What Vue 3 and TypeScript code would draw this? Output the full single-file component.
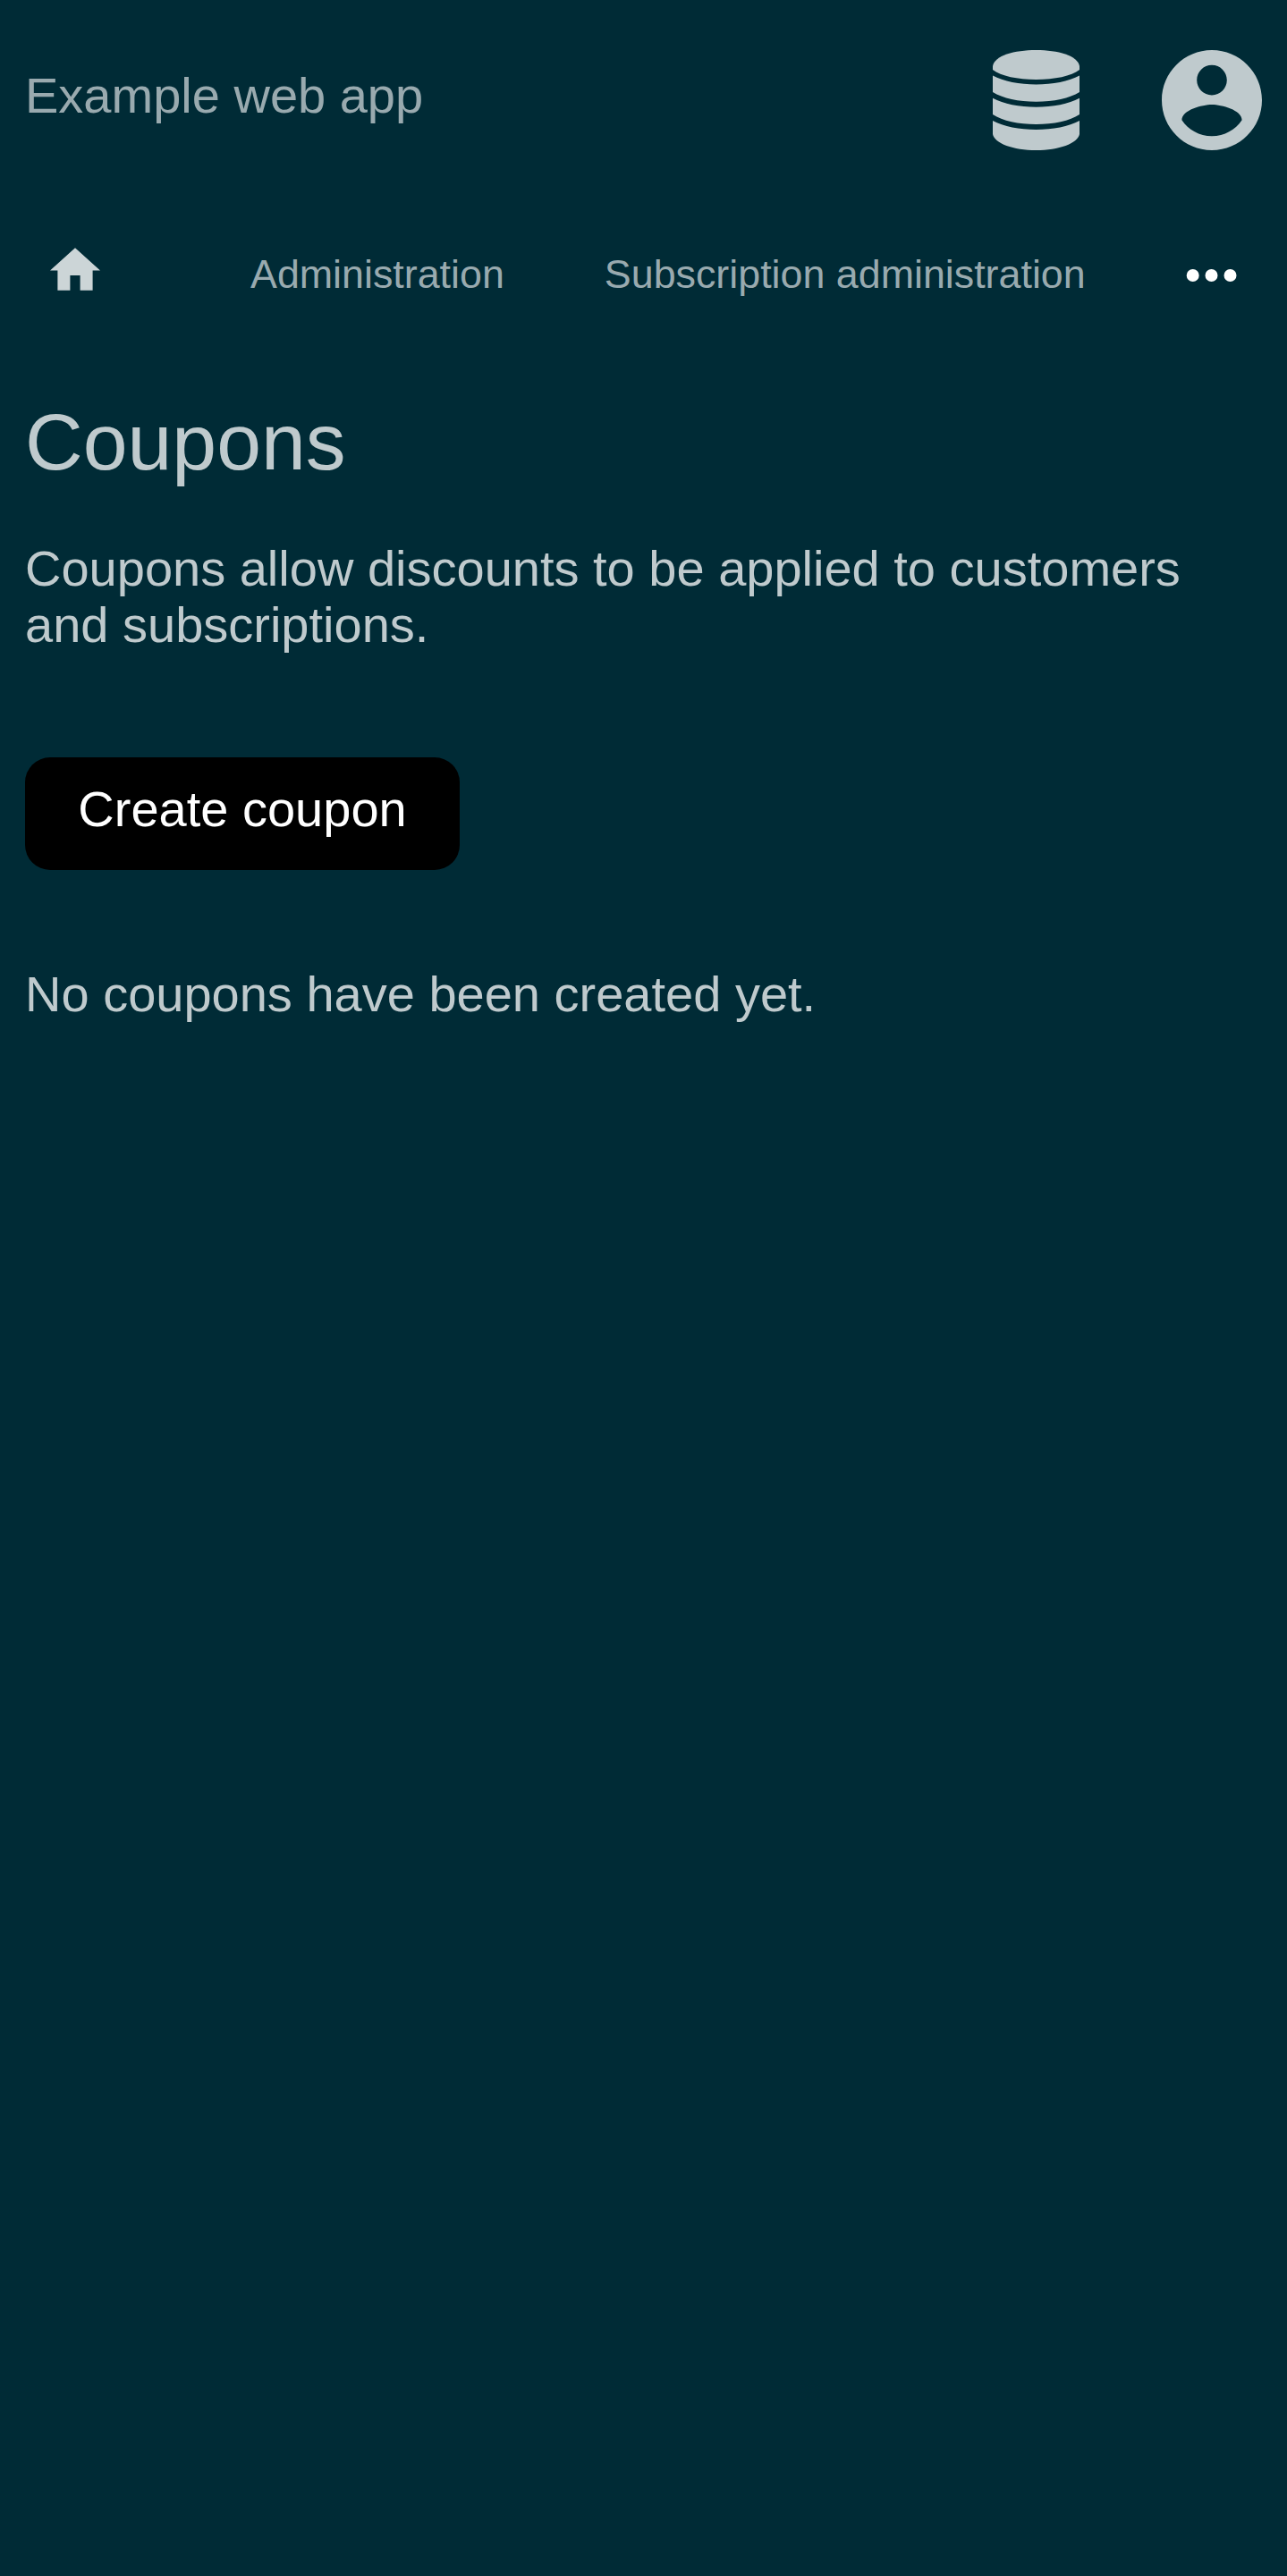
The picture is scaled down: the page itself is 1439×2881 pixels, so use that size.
<script setup lang="ts">
const pageTitle: string = 'Coupons'
const links: string[] = ['Administration', 'Subscription administration']
</script>

<template>
  <div class="page">
    <header class="top">
      <span class="brand">Example web app</span>
      <svg class="db" viewBox="0 0 97 112">
        <path d="M0 18C2 6 24 0 48.500 0S95 6 97 18V22C88 29 69 33 48.500 33S9 29 0 22Z" />
        <path d="M0 28.500C12 35 30 38.500 48.500 38.500S85 35 97 28.500V47C86 54 68 57.700 48.500 57.700S11 54 0 47Z" />
        <path d="M0 53.800C12 60.300 30 63.800 48.500 63.800S85 60.300 97 53.800V72C86 79.300 68 83 48.500 83S11 79.300 0 72Z" />
        <path d="M0 79C12 85.500 30 89 48.500 89S85 85.500 97 79V94C95 104.500 74 112 48.500 112S2 104.500 0 94Z" />
      </svg>
      <svg class="user" viewBox="2 2 20 20"><path d="M12 2C6.480 2 2 6.480 2 12s4.480 10 10 10 10-4.480 10-10S17.520 2 12 2zm0 3c1.660 0 3 1.340 3 3s-1.340 3-3 3-3-1.340-3-3 1.340-3 3-3zm0 14.200c-2.500 0-4.710-1.280-6-3.220.03-1.990 4-3.080 6-3.080 1.990 0 5.970 1.090 6 3.080-1.290 1.940-3.500 3.220-6 3.220z" /></svg>
    </header>
    <nav class="nav">
      <svg class="home" viewBox="2 3 20 17"><path d="M10 20v-6h4v6h5v-8h3L12 3 2 12h3v8z" /></svg>
      <a v-for="link in links" :key="link">{{ link }}</a>
      <svg class="more" viewBox="0 0 56 14"><circle cx="6.700" cy="7" r="7" /><circle cx="27.500" cy="7" r="7" /><circle cx="48.500" cy="7" r="7" /></svg>
    </nav>
    <main>
      <h1>{{ pageTitle }}</h1>
      <p>Coupons allow discounts to be applied to customers and subscriptions.</p>
      <button type="button">Create coupon</button>
      <p class="empty">No coupons have been created yet.</p>
    </main>
  </div>
</template>

<style>
body { background: #002b36; }
</style>
<style scoped>
.page { box-sizing: border-box; min-height: 2881px; padding: 0 28px; background: #002b36; color: #bfcacd; font: 56px/63px "Liberation Sans", Arial, sans-serif; }
.top { display: flex; height: 224px; align-items: flex-start; }
.brand { margin-top: 75px; margin-right: auto; color: #99aaaf; }
svg { display: block; fill: #bfcacd; flex: none; }
.db { width: 97px; height: 112px; margin: 56px 92px 0 0; }
.user { width: 112px; height: 112px; margin-top: 56px; }
.nav { display: flex; height: 168px; align-items: flex-start; font-size: 44.8px; line-height: 52px; color: #99aaaf; }
.home { width: 56px; height: 48px; margin: 53px 168px 0 28px; fill: #ccd5d7; }
.nav a { margin-top: 56px; margin-right: 112px; white-space: nowrap; }
.nav a:last-of-type { margin-right: 0; }
.more { width: 56px; height: 14px; margin: 77px 28px 0 auto; fill: #fff; overflow: visible; }
h1 { margin: 52px 0 0; font-size: 89.6px; line-height: 100px; font-weight: 400; }
p { margin: 60px 0 0; }
button { display: block; width: 486px; height: 126px; margin-top: 117px; padding: 0 0 11px; border: 0; border-radius: 28px; background: #000; color: #fff; font: inherit; }
.empty { margin-top: 107px; }
</style>
